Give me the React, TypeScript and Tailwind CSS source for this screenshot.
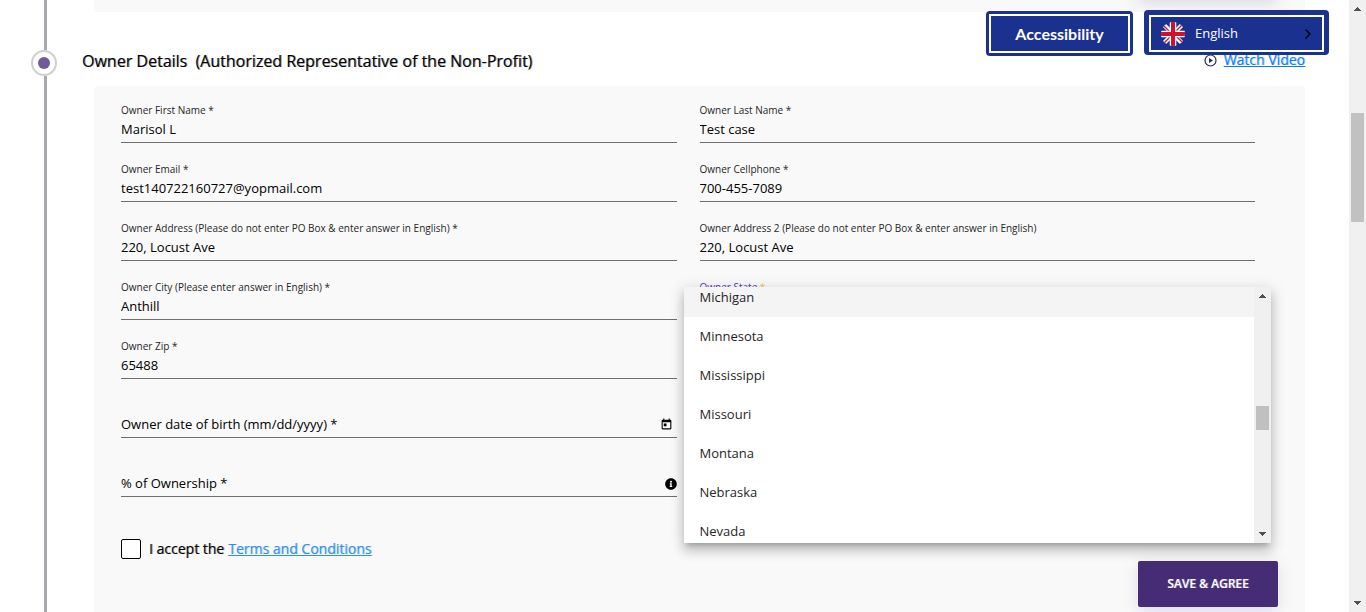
import React from "react";
import { FaInfoCircle } from "react-icons/fa";
import { FiChevronRight } from "react-icons/fi";

type FieldProps = { id: string; label: string; value: string; single?: boolean };

function Field({ id, label, value, single }: FieldProps) {
  return (
    <div className={single ? "col-start-1" : ""}>
      <label htmlFor={id} className="block text-[10px] leading-[17px] text-neutral-800">
        {label}
      </label>
      <input
        id={id}
        defaultValue={value}
        className="block h-6 w-full border-b border-[#6f6f72] bg-transparent pb-[3px] text-[13px] text-black outline-none"
      />
    </div>
  );
}

function EmptyField({ id, label, children }: { id: string; label: string; children: React.ReactNode }) {
  return (
    <div className="col-start-1 flex h-[41px] flex-col justify-end">
      <div className="flex h-6 items-center border-b border-[#6f6f72] pb-[2px]">
        <label htmlFor={id} className="text-[13px] text-black">
          {label}
        </label>
        <input id={id} className="h-full min-w-0 flex-1 bg-transparent text-[13px] outline-none" />
        {children}
      </div>
    </div>
  );
}

function Arrow({ down }: { down?: boolean }) {
  return (
    <svg width="17" height="17" viewBox="0 0 17 17" fill="#505050" aria-hidden="true" shapeRendering="crispEdges">
      <path d={down ? "M5 6h7l-3.5 4z" : "M5 11h7l-3.5-4z"} />
    </svg>
  );
}

function Flag() {
  return (
    <svg width="24" height="24" viewBox="0 0 24 24" aria-hidden="true">
      <defs>
        <clipPath id="flag-round">
          <circle cx="12" cy="12" r="12" />
        </clipPath>
      </defs>
      <g clipPath="url(#flag-round)">
        <rect width="24" height="24" fill="#1b3190" />
        <path d="M2 2l20 20M22 2L2 22" stroke="#fff" strokeWidth="4.5" />
        <path d="M3 4l6 6M21 3l-6 6M3 21l6-6M21 20l-6-6" stroke="#cf1030" strokeWidth="1.4" />
        <path d="M12 0v24M0 12h24" stroke="#fff" strokeWidth="6.6" />
        <path d="M12 0v24M0 12h24" stroke="#cf1030" strokeWidth="4" />
      </g>
    </svg>
  );
}

const states = ["Michigan", "Minnesota", "Mississippi", "Missouri", "Montana", "Nebraska", "Nevada"];

function StateField() {
  return (
    <div className="relative">
      <label htmlFor="state" className="block text-[10px] leading-[17px] text-[#5b35b5]">
        Owner State <span className="text-[#f5c542]">*</span>
      </label>
      <button id="state" type="button" role="combobox" aria-expanded="true" aria-controls="state-list" className="block h-6 w-full border-b border-[#6f6f72]" />
      <div className="absolute -inset-x-4 top-2 z-10 flex h-64 overflow-hidden bg-white shadow-[0_5px_5px_-3px_rgba(0,0,0,0.2),0_8px_10px_1px_rgba(0,0,0,0.14),0_3px_14px_2px_rgba(0,0,0,0.12)]">
        <ul id="state-list" role="listbox" className="-mt-[9px] flex-1">
          {states.map((s, i) => (
            <li
              key={s}
              role="option"
              aria-selected={i === 0}
              className={
                i === 0
                  ? "h-[39px] bg-[#f4f4f4] px-4 text-[13px] leading-[39px] text-neutral-800"
                  : "h-[39px] px-4 text-[13px] leading-[39px] text-neutral-800"
              }
            >
              {s}
            </li>
          ))}
        </ul>
        <div className="flex w-[17px] flex-col items-center bg-[#f0f0f0]">
          <Arrow />
          <div className="flex-[102]" />
          <div className="h-6 w-[13px] bg-[#c0c0c0]" />
          <div className="flex-[96]" />
          <Arrow down />
        </div>
      </div>
    </div>
  );
}

export default function App() {
  return (
    <div className="flex h-screen overflow-hidden bg-white font-['Open_Sans',sans-serif] text-black">
      <div className="flex w-[82px] shrink-0 flex-col pl-[31px]">
        <div className="ml-[13px] h-[50px] w-[3px] bg-[#a9a8ad]" />
        <div className="flex size-[26px] items-center justify-center rounded-full border-2 border-[#cfcfcf]">
          <div className="size-3 rounded-full bg-[#705a9a]" />
        </div>
        <div className="ml-[13px] w-[3px] flex-1 bg-[#a9a8ad]" />
      </div>

      <main className="flex min-w-0 flex-1 flex-col pr-11">
        <div className="ml-3 h-3 shrink-0 overflow-hidden rounded-b bg-[#f9f9f9] pr-[27px]">
          <div className="-mt-[46px] ml-auto h-[46px] w-[140px] shadow-[0_4px_16px_0_rgba(69,44,117,0.15)]" />
        </div>
        <header className="flex h-[74px] shrink-0 items-center justify-between pt-6">
          <h2 className="text-base [text-shadow:1px_0_0_rgba(0,0,0,0.4)]">
            Owner Details <span className="ml-1">(Authorized Representative of the Non-Profit)</span>
          </h2>
          <a href="#video" className="flex items-center gap-[7px] pb-[2px] text-sm text-[#0a7cf5] [text-shadow:1px_0_0_rgba(10,124,245,0.4)]">
            <svg width="13" height="13" viewBox="0 0 13 13" fill="none" stroke="#2f2357" aria-hidden="true">
              <circle cx="6.5" cy="6.5" r="5.5" strokeWidth="1.2" />
              <path d="M5 4l4 2.5L5 9z" fill="#2f2357" stroke="none" />
            </svg>
            <span className="underline">Watch Video</span>
          </a>
        </header>

        <form className="ml-3 flex-1 rounded-t bg-[#f9f9f9] pt-4 pr-[27px] pl-[27px]">
          <div className="grid grid-cols-2 gap-x-[23px] gap-y-[18px] pr-[23px]">
            <Field id="first" label="Owner First Name *" value="Marisol L" />
            <Field id="last" label="Owner Last Name *" value="Test case" />
            <Field id="email" label="Owner Email *" value="test140722160727@yopmail.com" />
            <Field id="phone" label="Owner Cellphone *" value="700-455-7089" />
            <Field id="addr1" label="Owner Address (Please do not enter PO Box & enter answer in English) *" value="220, Locust Ave" />
            <Field id="addr2" label="Owner Address 2 (Please do not enter PO Box & enter answer in English)" value="220, Locust Ave" />
            <Field id="city" label="Owner City (Please enter answer in English) *" value="Anthill" />
            <StateField />
            <Field id="zip" label="Owner Zip *" value="65488" single />
            <EmptyField id="dob" label="Owner date of birth (mm/dd/yyyy) *">
              <button type="button" aria-label="Open calendar" className="mr-1">
                <svg width="13" height="13" viewBox="0 0 24 24" fill="#000">
                  <path d="M19 3h-1V1h-2v2H8V1H6v2H5c-1.11 0-1.99.9-1.99 2L3 19c0 1.1.89 2 2 2h14c1.1 0 2-.9 2-2V5c0-1.1-.9-2-2-2zm0 16H5V8h14v11zM7 10h5v5H7z" />
                </svg>
              </button>
            </EmptyField>
            <EmptyField id="share" label="% of Ownership *">
              <FaInfoCircle size={12} />
            </EmptyField>
          </div>
          <div className="mt-[42px] flex items-center text-sm">
            <input id="terms" type="checkbox" className="size-5 appearance-none rounded-xs border border-black bg-white" />
            <label htmlFor="terms" className="ml-2 [text-shadow:1px_0_0_rgba(0,0,0,0.4)]">
              I accept the
            </label>
            <a href="#terms" className="ml-1 text-[#2f8fee] underline [text-shadow:1px_0_0_rgba(47,143,238,0.4)]">
              Terms and Conditions
            </a>
          </div>
          <button
            type="submit"
            className="mt-[2px] ml-auto block h-[46px] w-[140px] rounded-xs bg-[#452c75] text-xs font-semibold text-white shadow-[0_4px_16px_0_rgba(69,44,117,0.15)] [text-shadow:1px_0_0_rgba(255,255,255,0.4)]"
          >
            SAVE &amp; AGREE
          </button>
        </form>
      </main>

      <div className="flex w-[17px] shrink-0 flex-col items-center bg-[#f0f0f0]">
        <Arrow />
        <div className="flex-[96]" />
        <div className="h-[109px] w-[13px] bg-[#c1c1c1]" />
        <div className="flex-[373]" />
        <Arrow down />
      </div>

      <div className="absolute top-[10px] right-[37px] z-20 flex items-start gap-[11px]">
        <button type="button" className="mt-px h-[45px] w-[147px] rounded bg-[#1b3190] p-[3px] font-[Lato,sans-serif] text-base font-bold text-white">
          <span className="flex h-full items-center justify-center border-2 border-white">Accessibility</span>
        </button>
        <button type="button" className="h-[45px] w-[185px] rounded bg-[#1b3190] px-[5px] pt-[5px] pb-[3px] text-[13px] text-white">
          <span className="flex h-full items-center border-2 border-white pl-[10px] pr-[6px]">
            <Flag />
            <span className="ml-[10px] flex-1 text-left">English</span>
            <FiChevronRight size={16} color="#000" />
          </span>
        </button>
      </div>
    </div>
  );
}
